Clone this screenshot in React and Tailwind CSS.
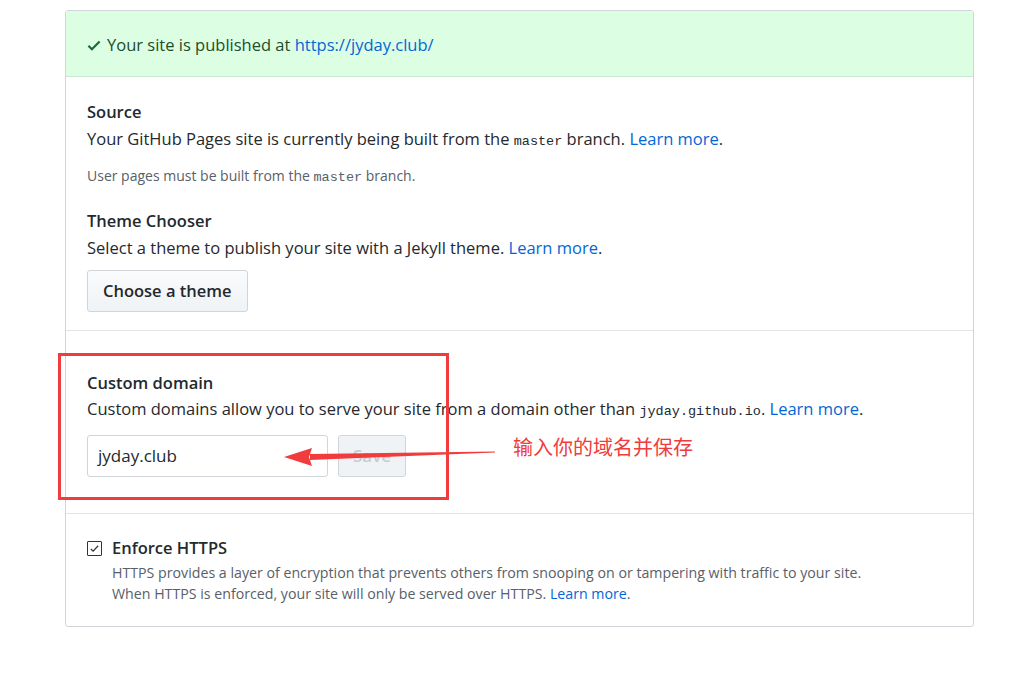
import React from "react";

const font = { fontFamily: '"Open Sans", "Noto Sans", sans-serif' };

function Check({ className }) {
  return (
    <svg viewBox="0 0 12 16" className={className} fill="currentColor">
      <path fillRule="evenodd" d="M12 5l-8 8-4-4 1.5-1.5L4 10l6.5-6.5L12 5z" />
    </svg>
  );
}

function Link({ children }) {
  return <a className="text-[#0366d6]">{children}</a>;
}

function Mono({ children }) {
  return (
    <code className="font-['Liberation_Mono','DejaVu_Sans_Mono',monospace] text-[13.5px]">
      {children}
    </code>
  );
}

export default function App() {
  return (
    <div
      className="relative w-[1036px] h-[673px] bg-white text-[#24292e] font-['Open_Sans','Noto_Sans',sans-serif] overflow-hidden"
      style={font}
    >
      <div className="pt-[10px] pl-[65px]">
        <div className="w-[909px] border border-[#d1d5da] rounded-[3px]">
          {/* published banner */}
          <div className="h-[66px] bg-[#dcffe4] border-b border-[#c9e9d0] flex items-center pl-[21px] pt-[3px] text-[16.5px] text-[#1e4d2b]">
            <Check className="w-[14px] h-[17px] text-[#1a6b32] mr-[6px]" />
            <span>
              Your site is published at <Link>https://jyday.club/</Link>
            </span>
          </div>

          {/* source + theme */}
          <div className="px-[21px] pt-[23px] pb-[18px] border-b border-[#e1e4e8]">
            <div className="font-semibold text-[16.5px] leading-[24px]">Source</div>
            <p className="text-[16.5px] leading-[24px] mt-[3px]">
              Your GitHub Pages site is currently being built from the <Mono>master</Mono> branch.{" "}
              <Link>Learn more</Link>.
            </p>
            <p className="text-[14px] text-[#586069] mt-[12px] leading-[20px]">
              User pages must be built from the <Mono>master</Mono> branch.
            </p>
            <div className="font-semibold text-[16.5px] leading-[24px] mt-[21px]">Theme Chooser</div>
            <p className="text-[16.5px] leading-[24px] mt-[3px]">
              Select a theme to publish your site with a Jekyll theme. <Link>Learn more</Link>.
            </p>
            <button className="mt-[10px] h-[42px] px-[15px] rounded-[3px] border border-[#d1d5da] bg-gradient-to-b from-[#fafbfc] to-[#eff3f6] font-semibold text-[16.5px]">
              Choose a theme
            </button>
          </div>

          {/* custom domain */}
          <div className="px-[21px] pt-[40px] pb-[36px] border-b border-[#e1e4e8]">
            <div className="font-semibold text-[16.5px] leading-[24px]">Custom domain</div>
            <p className="text-[16.5px] leading-[24px] mt-[2px]">
              Custom domains allow you to serve your site from a domain other than{" "}
              <Mono>jyday.github.io</Mono>. <Link>Learn more</Link>.
            </p>
            <div className="flex mt-[11px] gap-[10px]">
              <div className="w-[241px] h-[42px] border border-[#d1d5da] rounded-[3px] flex items-center px-[10px] text-[17px]">
                jyday.club
              </div>
              <button className="w-[68px] h-[42px] border border-[#d1d5da] rounded-[3px] bg-[#eff3f6] text-[#c6cbd1] font-semibold text-[17px]">
                Save
              </button>
            </div>
          </div>

          {/* https */}
          <div className="px-[21px] pt-[22px] pb-[22px]">
            <div className="flex items-center gap-[10px]">
              <div className="w-[15px] h-[15px] border border-[#333] rounded-[1px] flex items-center justify-center">
                <svg viewBox="0 0 12 12" className="w-[11px] h-[11px]" fill="none" stroke="#333" strokeWidth="1.3">
                  <path d="M2 6.5l2.5 2.5L10 3" />
                </svg>
              </div>
              <span className="font-semibold text-[16.5px]">Enforce HTTPS</span>
            </div>
            <div className="pl-[25px] text-[14.2px] text-[#586069] leading-[21px] mt-[1px]">
              <p>HTTPS provides a layer of encryption that prevents others from snooping on or tampering with traffic to your site.</p>
              <p>
                When HTTPS is enforced, your site will only be served over HTTPS. <Link>Learn more</Link>.
              </p>
            </div>
          </div>
        </div>
      </div>

      {/* annotation: red box */}
      <div className="absolute left-[58px] top-[353px] w-[391px] h-[147px] border-[3px] border-[#f03c3c]" />
      {/* annotation: arrow */}
      <svg className="absolute left-0 top-0 pointer-events-none" width="1036" height="673">
        <polygon points="495,451.5 310,454 310,460 495,452.5" fill="#f03c3c" />
        <polygon points="284,457 312,448 309,457 312,466" fill="#f03c3c" />
      </svg>
      <div className="absolute left-[513px] top-[433px] text-[20px] leading-[28px] text-[#f03c3c] font-['Noto_Sans_CJK_SC',sans-serif]">
        输入你的域名并保存
      </div>
    </div>
  );
}
